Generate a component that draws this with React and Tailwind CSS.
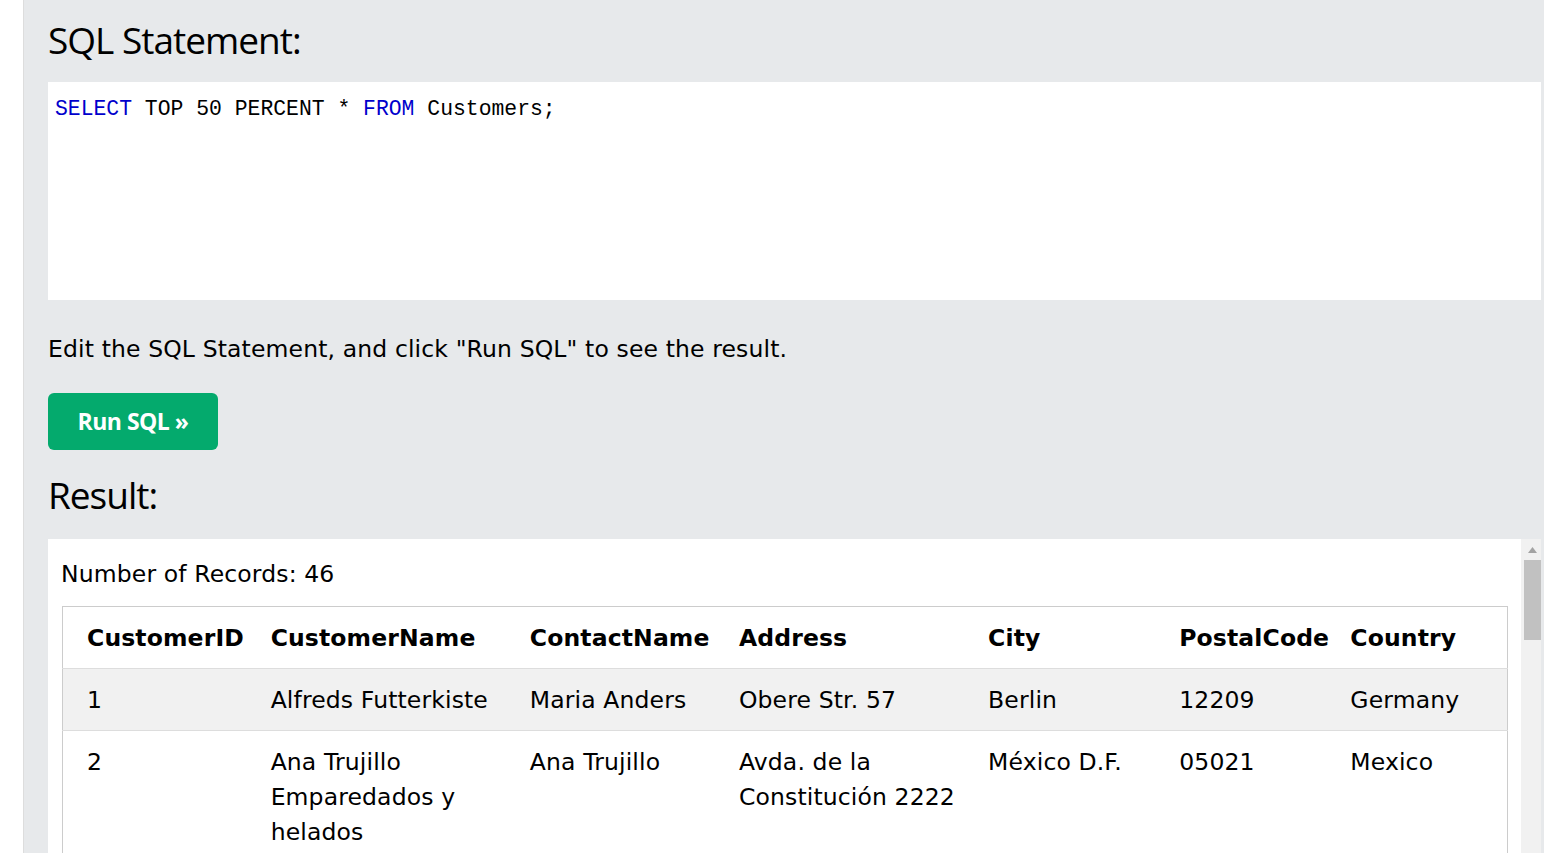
import React from 'react';

const rows = [
  ['1', 'Alfreds Futterkiste', 'Maria Anders', 'Obere Str. 57', 'Berlin', '12209', 'Germany'],
  ['2', 'Ana Trujillo Emparedados y helados', 'Ana Trujillo', 'Avda. de la Constitución 2222', 'México D.F.', '05021', 'Mexico'],
  ['3', 'Antonio Moreno Taquería', 'Antonio Moreno', 'Mataderos 2312', 'México D.F.', '05023', 'Mexico'],
];

const cols = ['CustomerID', 'CustomerName', 'ContactName', 'Address', 'City', 'PostalCode', 'Country'];
const widths = ['w-[196px]', 'w-[259px]', 'w-[209px]', 'w-[249px]', 'w-[191px]', 'w-[171px]', 'w-[169px]'];

const headFont = { fontFamily: '"Open Sans", "Noto Sans", sans-serif' };
const bodyFont = { fontFamily: '"DejaVu Sans", Verdana, sans-serif' };

export default function App() {
  return (
    <div className="flex h-[853px] w-[1544px] overflow-hidden bg-white">
      {/* left gutter */}
      <div className="w-[24px] shrink-0 border-r border-[#dddddd] bg-white" />

      <div className="flex-1 bg-[#e7e9eb] pl-[24px] pr-[3px]">
        <h2 className="pt-[14px] pb-[16px] text-[37px] leading-[52px] tracking-[-1px] text-black" style={headFont}>
          SQL Statement:
        </h2>

        {/* editor */}
        <div className="h-[218px] bg-white px-[7px] pt-[14px]" style={{ fontFamily: '"Liberation Mono", "DejaVu Sans Mono", monospace' }}>
          <p className="text-[21.4px] leading-[26px] whitespace-pre text-black">
            <span className="text-[#0000cc]">SELECT</span> TOP 50 PERCENT * <span className="text-[#0000cc]">FROM</span> Customers;
          </p>
        </div>

        <p className="mt-[32px] text-[23.5px] leading-[34px] tracking-[0.13px] text-black" style={bodyFont}>
          Edit the SQL Statement, and click "Run SQL" to see the result.
        </p>

        <button className="mt-[27px] flex h-[57px] w-[170px] items-center justify-center rounded-[6px] bg-[#04aa6d] text-[23px] font-bold tracking-[-0.5px] text-white" style={headFont}>
          Run SQL »
        </button>

        <h2 className="pt-[19px] pb-[18px] text-[37px] leading-[52px] tracking-[-1px] text-black" style={headFont}>
          Result:
        </h2>

        {/* result pane */}
        <div className="flex h-[400px]" style={bodyFont}>
          <div className="flex-1 bg-white pl-[13px] pr-[12px] pt-[18px]">
            <p className="text-[23.5px] leading-[34px] tracking-[0.13px] text-black">Number of Records: 46</p>
            <table className="ml-[1px] mt-[15px] w-[1446px] table-fixed border-collapse border border-[#cccccc] text-[23.5px] leading-[35px] tracking-[0.13px] text-black">
              <thead>
                <tr className="border-b border-[#dddddd]">
                  {cols.map((c, i) => (
                    <th key={c} className={`${widths[i]} ${i === 0 ? 'pl-[24px]' : 'pl-[12px]'} pr-[4px] pt-[14px] pb-[12px] text-left font-bold`}>
                      {c}
                    </th>
                  ))}
                </tr>
              </thead>
              <tbody>
                {rows.map((r, ri) => (
                  <tr key={ri} className={`border-b border-[#dddddd] ${ri % 2 === 0 ? 'bg-[#f1f1f1]' : 'bg-white'}`}>
                    {r.map((v, i) => (
                      <td key={i} className={`${i === 0 ? 'pl-[24px]' : 'pl-[12px]'} pr-[8px] pt-[14px] pb-[12px] align-top`}>
                        {v}
                      </td>
                    ))}
                  </tr>
                ))}
              </tbody>
            </table>
          </div>

          {/* scrollbar */}
          <div className="flex w-[20px] flex-col items-end bg-[#f1f1f1]">
            <div className="flex h-[21px] w-[17px] items-center justify-center">
              <svg width="9" height="6" viewBox="0 0 9 6"><path d="M4.5 0L9 6H0z" fill="#a3a3a3" /></svg>
            </div>
            <div className="h-[80px] w-[17px] bg-[#c1c1c1]" />
          </div>
        </div>
      </div>
    </div>
  );
}
